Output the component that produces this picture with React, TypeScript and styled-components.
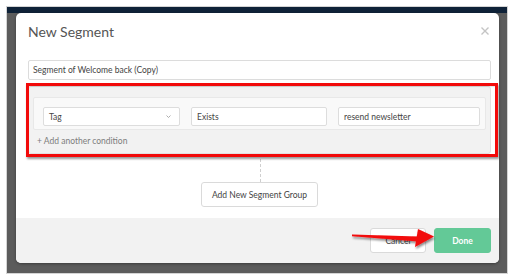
import React from "react";
import styled, { createGlobalStyle } from "styled-components";

const Global = createGlobalStyle`
  html, body { margin: 0; padding: 0; background: #ffffff; }
  body { font-family: Lato, "Open Sans", "Liberation Sans", sans-serif; }
  * { box-sizing: border-box; }
`;

const Frame = styled.div`
  position: relative;
  width: 514px;
  height: 280px;
  padding: 6px;
  background: #ffffff;
`;

const Screen = styled.div`
  width: 100%;
  height: 100%;
  border: 1px solid #d4d4d4;
  background: #5c5c5c;
  display: flex;
  flex-direction: column;
  overflow: hidden;
`;

const NavStrip = styled.div`
  height: 6px;
  flex: none;
  background: #0f2238;
`;

const Stage = styled.div`
  flex: 1;
  display: flex;
  flex-direction: column;
  padding: 0 8px 0 9px;
`;

const Modal = styled.div`
  height: 250px;
  background: #ffffff;
  border-radius: 5px;
  box-shadow: 0 1px 3px rgba(0, 0, 0, 0.35);
  display: flex;
  flex-direction: column;
  overflow: hidden;
`;

const Header = styled.div`
  height: 47px;
  display: flex;
  align-items: flex-start;
  padding: 10px 10px 0 12px;
`;

const Title = styled.h2`
  flex: 1;
  margin: 0;
  font-size: 14px;
  line-height: 18px;
  font-weight: 400;
  color: #555555;
`;

const Close = styled.svg`
  margin-top: 4px;
  width: 8px;
  height: 8px;
`;

const Body = styled.div`
  display: flex;
  flex-direction: column;
  padding: 0 8px 0 12px;
`;

const NameInput = styled.div`
  height: 20px;
  border: 1px solid #dcdcdc;
  border-radius: 2px;
  padding-left: 4px;
  font-size: 8.5px;
  line-height: 18px;
  color: #444444;
`;

const GroupWrap = styled.div`
  position: relative;
  margin-top: 6px;
`;

const Panel = styled.div`
  height: 68px;
  background: #f2f2f2;
  border: 1px solid #e2e2e2;
  border-radius: 3px;
  padding: 10px 4px 0 4px;
`;

const RedBox = styled.div`
  position: absolute;
  left: -2px;
  top: -3px;
  right: -7px;
  bottom: -3px;
  border: 3px solid #f20a0a;
  box-shadow: 1px 2px 2px rgba(0, 0, 0, 0.4), inset 0 1px 1px rgba(0, 0, 0, 0.1);
  pointer-events: none;
`;

const ConditionRow = styled.div`
  height: 33px;
  background: #f9f9f9;
  border: 1px solid #e8e8e8;
  border-radius: 2px;
  padding: 9px 5px 3px 9px;
  display: grid;
  grid-template-columns: 137fr 136fr 142fr;
  gap: 11px;
`;

const Field = styled.div`
  height: 19px;
  background: #ffffff;
  border: 1px solid #dddddd;
  border-radius: 2px;
  padding: 0 8px 0 5px;
  display: flex;
  align-items: center;
  justify-content: space-between;
  font-size: 8.5px;
  color: #444444;
`;

const Chevron = styled.svg`
  width: 5px;
  height: 3px;
`;

const AddCondition = styled.div`
  height: 23px;
  line-height: 23px;
  padding-left: 4px;
  font-size: 8.5px;
  color: #7d7d7d;
`;

const Connector = styled.div`
  height: 28px;
  width: 0;
  align-self: center;
  border-left: 1px dashed #cfcfcf;
  margin-left: 1px;
`;

const GroupButton = styled.div`
  align-self: center;
  width: 117px;
  height: 25px;
  border: 1px solid #dadada;
  border-radius: 3px;
  background: #ffffff;
  display: flex;
  align-items: center;
  justify-content: center;
  font-size: 8.5px;
  font-weight: 400;
  color: #444444;
`;

const Footer = styled.div`
  margin-top: 11px;
  height: 45px;
  background: #f2f2f2;
  display: flex;
  justify-content: flex-end;
  gap: 8px;
  padding: 10px 8px;
`;

const Button = styled.div<{ $primary?: boolean }>`
  width: ${(p) => (p.$primary ? "57px" : "56px")};
  height: 25px;
  border-radius: 3px;
  display: flex;
  align-items: center;
  justify-content: center;
  font-size: 8.5px;
  font-weight: ${(p) => (p.$primary ? 700 : 400)};
  background: ${(p) => (p.$primary ? "#63c997" : "#ffffff")};
  border: 1px solid ${(p) => (p.$primary ? "#63c997" : "#dadada")};
  color: ${(p) => (p.$primary ? "#ffffff" : "#444444")};
`;

const Arrow = styled.svg`
  position: absolute;
  left: 0;
  top: 0;
  width: 514px;
  height: 280px;
  pointer-events: none;
`;

export default function App() {
  return (
    <>
      <Global />
      <Frame>
        <Screen>
          <NavStrip />
          <Stage>
            <Modal>
              <Header>
                <Title>New Segment</Title>
                <Close viewBox="0 0 8 8">
                  <path d="M0.5 0.5 L7.5 7.5 M7.5 0.5 L0.5 7.5" stroke="#c4c4c4" strokeWidth="1.4" />
                </Close>
              </Header>
              <Body>
                <NameInput>Segment of Welcome back (Copy)</NameInput>
                <GroupWrap>
                  <Panel>
                    <ConditionRow>
                      <Field>
                        Tag
                        <Chevron viewBox="0 0 5 3">
                          <path d="M0.5 0.5 L2.5 2.5 L4.5 0.5" fill="none" stroke="#999" strokeWidth="0.8" />
                        </Chevron>
                      </Field>
                      <Field>Exists</Field>
                      <Field>resend newsletter</Field>
                    </ConditionRow>
                    <AddCondition>+ Add another condition</AddCondition>
                  </Panel>
                  <RedBox />
                </GroupWrap>
                <Connector />
                <GroupButton>Add New Segment Group</GroupButton>
              </Body>
              <Footer>
                <Button>Cancel</Button>
                <Button $primary>Done</Button>
              </Footer>
            </Modal>
          </Stage>
        </Screen>
        <Arrow viewBox="0 0 514 280">
          <defs>
            <filter id="sh" x="-10%" y="-30%" width="130%" height="180%">
              <feDropShadow dx="1" dy="2" stdDeviation="1.2" floodColor="#000" floodOpacity="0.45" />
            </filter>
          </defs>
          <g filter="url(#sh)" fill="#f20a0a">
            <polygon points="352,234.5 418,236.5 418,241.5 352,236.3" />
            <polygon points="418,229 434,236.5 415,247" />
          </g>
        </Arrow>
      </Frame>
    </>
  );
}
